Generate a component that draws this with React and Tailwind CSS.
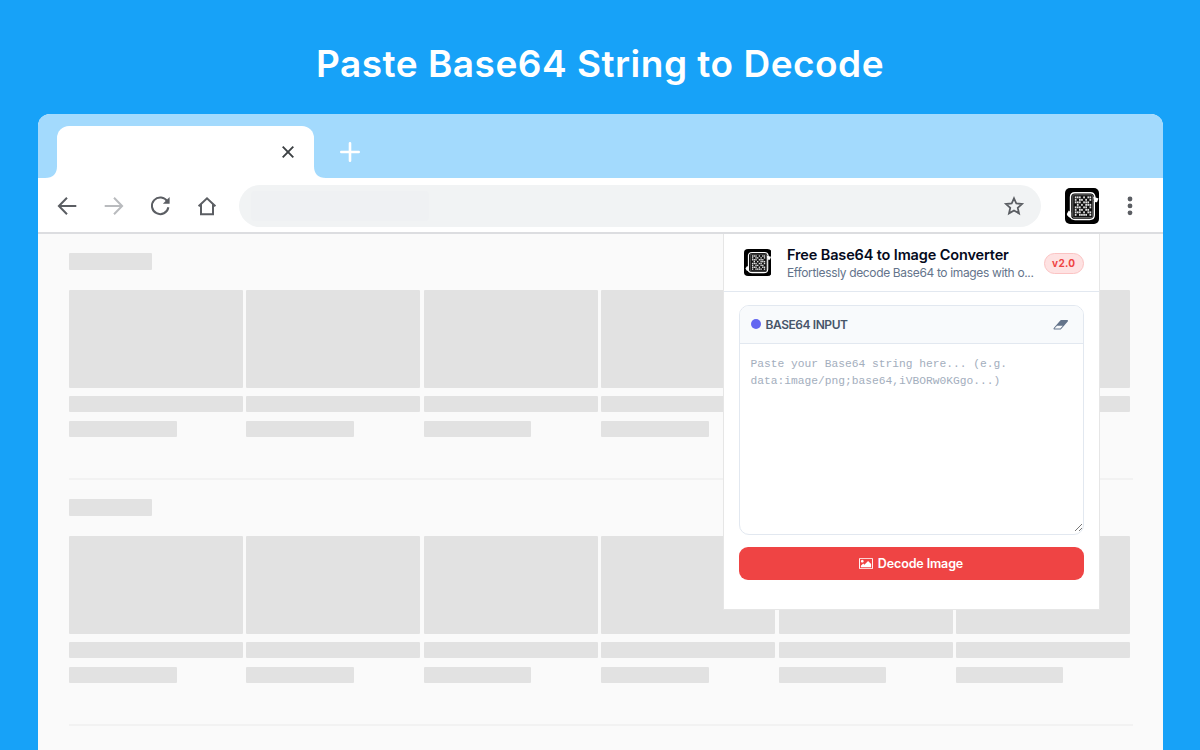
import React from 'react';

const QR = [
  '11101011',
  '10110101',
  '11101110',
  '01010111',
  '11101101',
  '10110110',
  '11101011',
  '10111101',
];

function AppLogo({ className }) {
  return (
    <svg viewBox="0 0 34 36" preserveAspectRatio="none" className={className}>
      <rect width="34" height="36" rx="5" fill="#000" />
      <path
        d="M29.800 14V8.500Q29 4.700 25.500 4.700H10Q5.500 4.700 5.500 9V28.500Q6 31.500 10 31.500H24.500Q29.300 31.500 29.300 27V13"
        fill="none"
        stroke="#fff"
        strokeWidth="1.400"
      />
      <path d="M28 8.500L33.500 10.500L32 14.200L29 14Z" fill="#fff" />
      <path d="M1.800 26L3.800 22.500L6.200 24.500V30Q2.500 29 1.800 26Z" fill="#fff" />
      <rect x="7.800" y="6.800" width="20" height="22.800" rx="1" fill="#111" stroke="#777" strokeWidth="0.900" />
      {QR.map((row, y) =>
        row.split('').map((c, x) =>
          c === '1' ? (
            <rect key={x + '-' + y} x={9.8 + x * 2.1} y={8.4 + y * 2.5} width="1.700" height="1.900" fill="#e0e0e0" />
          ) : null
        )
      )}
    </svg>
  );
}

function NavIcon({ children, color = '#5b5e63' }) {
  return (
    <svg width="24" height="24" viewBox="0 0 24 24" fill="none" stroke={color} strokeWidth="2" className="shrink-0">
      {children}
    </svg>
  );
}

function Tab() {
  return (
    <div className="flex items-end">
      <svg width="12" height="12" viewBox="0 0 12 12" fill="#fff">
        <path d="M12 0V12H0Q12 12 12 0Z" />
      </svg>
      <div className="flex h-[51.500px] w-[257px] items-center justify-end rounded-t-[12px] bg-white pr-[20px]">
        <svg width="12" height="12" viewBox="0 0 12 12" stroke="#3c4043" strokeWidth="1.900">
          <path d="M0.700 0.700L11.300 11.300M11.300 0.700L0.700 11.300" />
        </svg>
      </div>
      <svg width="12" height="12" viewBox="0 0 12 12" fill="#fff">
        <path d="M0 0V12H12Q0 12 0 0Z" />
      </svg>
    </div>
  );
}

function Toolbar() {
  return (
    <div className="flex h-[56.500px] items-center border-b-2 border-[#dcdde0] bg-white pl-[17.800px] pt-[1.500px]">
      <div className="flex gap-[22.600px]">
        <NavIcon>
          <path d="M21.300 12H4.200M12 3.700L3.900 12L12 20.300" />
        </NavIcon>
        <NavIcon color="#b9bbbe">
          <path d="M2.700 12H19.800M12 3.700L20.100 12L12 20.300" />
        </NavIcon>
        <NavIcon>
          <path d="M19.400 7.600A8.300 8.300 0 1 0 20.400 13.300" />
          <path d="M21.600 3.100V9.800H14.900Z" fill="#5b5e63" stroke="none" />
        </NavIcon>
        <NavIcon>
          <path d="M3.600 12.200L12 4.300L20.400 12.200M6 10.500V20.200H18V10.500" />
        </NavIcon>
      </div>
      <div className="ml-[19.700px] flex h-[42px] w-[802.500px] items-center justify-between rounded-full bg-[#f1f3f4] pl-[12px] pr-[15px]">
        <div className="h-[30px] w-[178px] rounded-[4px] bg-[#eff1f3]" />
        <NavIcon>
          <path
            strokeWidth="1.800"
            d="M12 4.300L14.350 9.500L20 10.050L15.750 13.850L17 19.400L12 16.500L7 19.400L8.250 13.850L4 10.050L9.650 9.500Z"
          />
        </NavIcon>
      </div>
      <AppLogo className="ml-[23.500px] h-[36px] w-[34px]" />
      <svg width="6" height="20" viewBox="0 0 6 20" fill="#5b5e63" className="ml-[28px]">
        <circle cx="3" cy="3" r="2.400" />
        <circle cx="3" cy="9.900" r="2.400" />
        <circle cx="3" cy="16.800" r="2.400" />
      </svg>
    </div>
  );
}

function SkeletonSection() {
  return (
    <section className="h-[246px]">
      <div className="h-[16.500px] w-[83px] rounded-[1px] bg-[#e2e2e2]" />
      <div className="mt-[20px] grid w-[1061px] grid-cols-6 gap-x-[3.400px]">
        {[0, 1, 2, 3, 4, 5].map((i) => (
          <div key={i}>
            <div className="h-[98px] rounded-[1px] bg-[#e2e2e2]" />
            <div className="mt-[8px] h-[16.500px] rounded-[1px] bg-[#e2e2e2]" />
            <div className="mt-[8.500px] h-[16.500px] w-[107.500px] rounded-[1px] bg-[#e2e2e2]" />
          </div>
        ))}
      </div>
      <div className="mt-[40.500px] h-[2px] w-[1064px] bg-[#f2f2f2]" />
    </section>
  );
}

function Popup() {
  return (
    <div className="absolute left-[685px] top-0 flex h-[376px] w-[377px] flex-col border border-t-0 border-[#e6e6e6] bg-white font-['Inter',sans-serif]">
      <header className="flex h-[57.500px] shrink-0 items-center border-b border-[#e2e8f0] pl-[20px] pr-[15px]">
        <AppLogo className="h-[27px] w-[27.500px] shrink-0" />
        <div className="ml-[16px] w-[248px] shrink-0 pt-[2px]">
          <h2 className="whitespace-nowrap text-[14.500px] font-semibold leading-[18px] tracking-[-0.140px] text-[#050a1c]">
            Free Base64 to Image Converter
          </h2>
          <p className="whitespace-nowrap text-[12px] leading-[17px] tracking-[-0.350px] text-[#64748b]">
            Effortlessly decode Base64 to images with o...
          </p>
        </div>
        <span className="ml-auto mt-[2px] flex h-[21px] w-[39.500px] shrink-0 items-center justify-center rounded-full border border-[#fbc3c3] bg-[#fee2e2] pt-px text-[10px] font-bold tracking-[0.300px] text-[#ef4444]">
          v2.0
        </span>
      </header>
      <div className="px-[15px] pt-[13px]">
        <div className="flex h-[230px] flex-col overflow-hidden rounded-[10px] border border-[#e2e8f0] bg-white">
          <div className="flex h-[38.500px] shrink-0 items-center border-b border-[#e2e8f0] bg-[#f8fafc] pl-[11px] pr-[14px]">
            <span className="h-[10px] w-[10px] rounded-full bg-[#6366f1]" />
            <span className="ml-[5px] pt-[1.500px] text-[12px] font-semibold tracking-[-0.430px] text-[#475569]">BASE64 INPUT</span>
            <svg viewBox="0 0 2048 1792" width="15.500" height="13.500" fill="#64748b" className="ml-auto">
              <path d="M960 1408l336-384H528l-336 384h768zm1013-1077q15 34 9.500 71.500T1952 468l-896 1024q-38 44-96 44H192q-38 0-69.500-20.500T75 1461q-15-34-9.500-71.500T96 1324L992 300q38-44 96-44h768q38 0 69.500 20.500T1973 331z" />
            </svg>
          </div>
          <div className="flex grow flex-col justify-between">
            <p className="whitespace-pre pl-[11px] pt-[11.500px] font-['Liberation_Mono',monospace] text-[11.250px] leading-[17px] text-[#a3aebd]">
              {'Paste your Base64 string here... (e.g.\ndata:image/png;base64,iVBORw0KGgo...)'}
            </p>
            <svg width="9" height="9" viewBox="0 0 9 9" stroke="#777" strokeWidth="1" className="mb-[2px] self-end">
              <path d="M1 8L8 1M5 8L8 5" />
            </svg>
          </div>
        </div>
        <button className="mt-[12px] flex h-[33.500px] w-full items-center justify-center gap-[5px] rounded-[9px] bg-[#ef4444] text-[12.500px] font-semibold tracking-[-0.120px] text-white">
          <svg viewBox="0 0 1920 1792" width="14" height="13" fill="currentColor">
            <path d="M640 576q0 80-56 136t-136 56-136-56-56-136 56-136 136-56 136 56 56 136zM1664 960v448H256v-192l320-320 160 160 512-512zM1760 256H160q-13 0-22.500 9.500T128 288v1216q0 13 9.500 22.500t22.500 9.500h1600q13 0 22.500-9.500t9.500-22.500V288q0-13-9.500-22.500T1760 256zm160 32v1216q0 66-47 113t-113 47H160q-66 0-113-47T0 1504V288q0-66 47-113t113-47h1600q66 0 113 47t47 113z" />
          </svg>
          <span className="pt-[2px]">Decode Image</span>
        </button>
      </div>
    </div>
  );
}

export default function App() {
  return (
    <div className="flex h-[750px] w-[1200px] flex-col overflow-hidden bg-[#17a2f8]">
      <h1 className="flex h-[114px] shrink-0 items-center justify-center whitespace-nowrap pt-[13px] font-['Inter',sans-serif] text-[37px] font-semibold leading-none tracking-[0.500px] text-white">
        Paste Base64 String to Decode
      </h1>
      <div className="ml-[37.500px] flex w-[1125px] grow flex-col overflow-hidden rounded-t-[12px] bg-[#fafafa]">
        <div className="flex h-[63.500px] shrink-0 items-end bg-[#a3dafd] pl-[7.500px]">
          <Tab />
          <svg width="20" height="20" viewBox="0 0 20 20" stroke="#fff" strokeWidth="2.600" strokeLinecap="round" className="mb-[16px] ml-[14px]">
            <path d="M10 1.300V18.700M1.300 10H18.700" />
          </svg>
        </div>
        <Toolbar />
        <main className="relative grow pl-[31.500px] pt-[19px]">
          <SkeletonSection />
          <SkeletonSection />
          <Popup />
        </main>
      </div>
    </div>
  );
}
